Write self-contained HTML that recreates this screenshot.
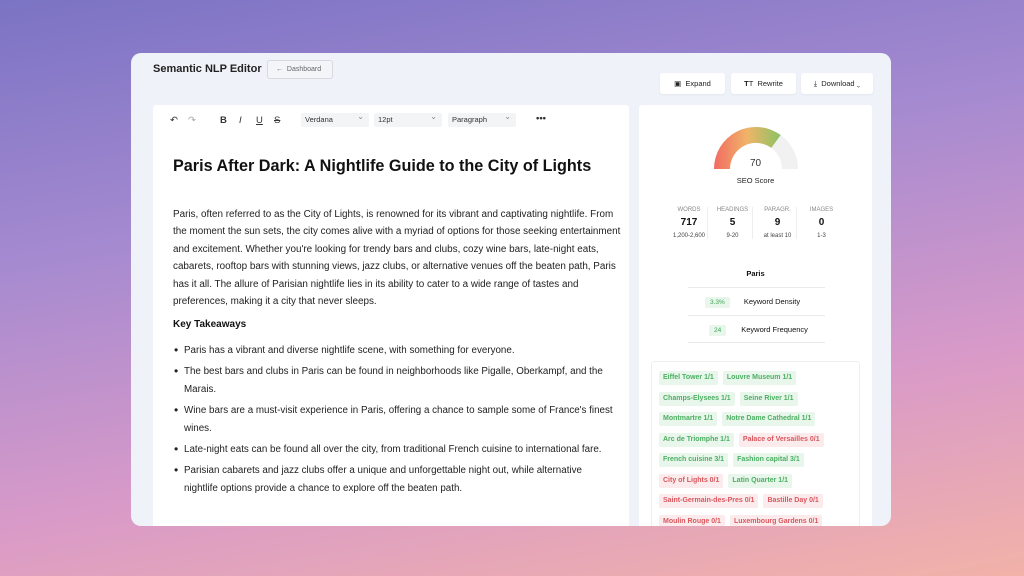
<!DOCTYPE html>
<html><head><meta charset="utf-8"><style>
*{box-sizing:border-box;margin:0;padding:0}
body{width:1024px;height:576px;overflow:hidden;font-family:"Liberation Sans",sans-serif;color:#111;
background:linear-gradient(170deg,#7b73c4 0%,#a58ad0 35%,#d99ac8 70%,#f2b2a8 100%);position:relative}
.card{position:absolute;left:131px;top:53px;width:760px;height:473px;background:#eff2f8;border-radius:10px;overflow:hidden}
.title{position:absolute;left:22px;top:10px;font-size:11px;font-weight:bold;color:#222}
.dash{position:absolute;left:136px;top:7px;width:66px;height:19px;border:1px solid #d6d9e0;border-radius:3px;background:#f3f5f9;font-size:7px;color:#666;line-height:17px;padding-left:8px}
.btn{position:absolute;top:20px;height:21px;background:#fff;border-radius:3px;font-size:7.5px;color:#222;line-height:21px;text-align:center;box-shadow:0 1px 2px rgba(0,0,0,.05)}
.ed{position:absolute;left:22px;top:52px;width:476px;height:430px;background:#fff;border-radius:3px}
.tb{position:absolute;top:10px;font-size:9.5px;color:#333}
.sel{position:absolute;top:8px;height:14px;background:#f3f4f6;border-radius:2px;font-size:7.5px;line-height:14px;padding-left:4px;color:#333}
.sel:after{content:"⌄";position:absolute;right:5px;top:-3px;color:#888;font-size:8px}
h1{position:absolute;left:20px;top:52px;font-size:16.2px;font-weight:bold;white-space:nowrap}
.p{position:absolute;left:20px;top:101px;width:452px;font-size:9.9px;line-height:17.4px;color:#222}
.kt{position:absolute;left:20px;top:214px;font-size:10px;font-weight:bold}
ul{position:absolute;left:20px;top:237px;width:440px;font-size:9.8px;line-height:17.4px;list-style:none;color:#222}
li{padding-left:11px;position:relative;margin-bottom:4px}
li:before{content:"•";position:absolute;left:1px;font-size:12px}
.rp{position:absolute;left:508px;top:52px;width:233px;height:430px;background:#fff;border-radius:3px}
.stat{position:absolute;top:102px;width:50px;text-align:center}
.stat .a{font-size:6px;color:#888}.stat .b{font-size:10px;font-weight:bold;margin-top:4px}.stat .c{font-size:6px;color:#444;margin-top:5px}
.kw{position:absolute;left:49px;width:137px;border-top:1px solid #e8eaee;height:28px;font-size:7.5px;line-height:28px}
.pill{display:inline-block;background:#e9f6ec;color:#3aa655;font-size:6.5px;padding:0 5px;line-height:11px;border-radius:2px}
.tags{position:absolute;left:12px;top:256px;width:209px;height:200px;border:1px solid #eceef2;border-radius:3px;padding:9px 0 0 7px;display:flex;flex-wrap:wrap;align-content:flex-start}
.t{display:block;font-size:7px;font-weight:bold;padding:0 4px;height:14px;line-height:14px;border-radius:2px;margin:0 5px 6.5px 0}
.br{flex-basis:100%;height:0}
.g{background:#e8f6eb;color:#4caf62}.r{background:#fcebec;color:#d9575d}
</style></head><body>
<div class="card">
<div class="title">Semantic NLP Editor</div>
<div class="dash">←&nbsp;&nbsp;Dashboard</div>
<div class="btn" style="left:529px;width:65px">▣&nbsp;&nbsp;Expand</div>
<div class="btn" style="left:600px;width:65px"><b>T</b>T&nbsp;&nbsp;Rewrite</div>
<div class="btn" style="left:670px;width:72px">⤓&nbsp;&nbsp;Download ⌄</div>
<div class="ed">
<div class="tb" style="left:17px">↶</div><div class="tb" style="left:35px;color:#aaa">↷</div>
<div class="tb" style="left:67px;font-weight:bold">B</div><div class="tb" style="left:86px;font-style:italic">I</div>
<div class="tb" style="left:103px;text-decoration:underline">U</div><div class="tb" style="left:121px;text-decoration:line-through">S</div>
<div class="sel" style="left:148px;width:68px">Verdana</div>
<div class="sel" style="left:221px;width:68px">12pt</div>
<div class="sel" style="left:295px;width:68px">Paragraph</div>
<div class="tb" style="left:383px;font-weight:bold;top:8px">•••</div>
<h1>Paris After Dark: A Nightlife Guide to the City of Lights</h1>
<div class="p">Paris, often referred to as the City of Lights, is renowned for its vibrant and captivating nightlife. From the moment the sun sets, the city comes alive with a myriad of options for those seeking entertainment and excitement. Whether you're looking for trendy bars and clubs, cozy wine bars, late-night eats, cabarets, rooftop bars with stunning views, jazz clubs, or alternative venues off the beaten path, Paris has it all. The allure of Parisian nightlife lies in its ability to cater to a wide range of tastes and preferences, making it a city that never sleeps.</div>
<div class="kt">Key Takeaways</div>
<ul>
<li>Paris has a vibrant and diverse nightlife scene, with something for everyone.</li>
<li>The best bars and clubs in Paris can be found in neighborhoods like Pigalle, Oberkampf, and the Marais.</li>
<li>Wine bars are a must-visit experience in Paris, offering a chance to sample some of France's finest wines.</li>
<li>Late-night eats can be found all over the city, from traditional French cuisine to international fare.</li>
<li>Parisian cabarets and jazz clubs offer a unique and unforgettable night out, while alternative nightlife options provide a chance to explore off the beaten path.</li>
</ul>
</div>
<div class="rp">
<svg style="position:absolute;left:74px;top:20px" width="86" height="45" viewBox="0 0 86 45">
<defs><linearGradient id="gg" x1="0" x2="1"><stop offset="0" stop-color="#f26b63"/><stop offset=".5" stop-color="#f0b468"/><stop offset="1" stop-color="#8cc263"/></linearGradient></defs>
<path d="M1 44A42 42 0 0 1 85 44L69 44A26 26 0 0 0 17 44Z" fill="#f1f1f1"/>
<path d="M1 44A42 42 0 0 1 67.7 10L58.3 22.9A26 26 0 0 0 17 44Z" fill="url(#gg)"/>
</svg>
<div style="position:absolute;left:0;width:233px;text-align:center;top:53px;font-size:10px;color:#333">70</div>
<div style="position:absolute;left:0;width:233px;text-align:center;top:71px;font-size:7.5px;color:#222">SEO Score</div>
<div class="stat" style="left:25px">
<div class="a">WORDS</div><div class="b">717</div><div class="c">1,200-2,600</div></div>
<div class="stat" style="left:68px;border-left:1px solid #eee">
<div class="a">HEADINGS</div><div class="b">5</div><div class="c">9-20</div></div>
<div class="stat" style="left:113px;border-left:1px solid #eee">
<div class="a">PARAGR.</div><div class="b">9</div><div class="c">at least 10</div></div>
<div class="stat" style="left:157px;border-left:1px solid #eee">
<div class="a">IMAGES</div><div class="b">0</div><div class="c">1-3</div></div>
<div style="position:absolute;left:0;width:233px;text-align:center;top:164px;font-size:7.5px;font-weight:bold">Paris</div>
<div class="kw" style="top:182px"><span class="pill" style="margin:0 14px 0 17px">3.3%</span>Keyword Density</div>
<div class="kw" style="top:210px;border-bottom:1px solid #e8eaee"><span class="pill" style="margin:0 15px 0 21px">24</span>Keyword Frequency</div>
<div class="tags">
<span class="t g">Eiffel Tower 1/1</span><span class="t g">Louvre Museum 1/1</span><span class="br"></span>
<span class="t g">Champs-Elysees 1/1</span><span class="t g">Seine River 1/1</span><span class="br"></span>
<span class="t g">Montmartre 1/1</span><span class="t g">Notre Dame Cathedral 1/1</span><span class="br"></span>
<span class="t g">Arc de Triomphe 1/1</span><span class="t r">Palace of Versailles 0/1</span><span class="br"></span>
<span class="t g">French cuisine 3/1</span><span class="t g">Fashion capital 3/1</span><span class="br"></span>
<span class="t r">City of Lights 0/1</span><span class="t g">Latin Quarter 1/1</span><span class="br"></span>
<span class="t r">Saint-Germain-des-Pres 0/1</span><span class="t r">Bastille Day 0/1</span><span class="br"></span>
<span class="t r">Moulin Rouge 0/1</span><span class="t r">Luxembourg Gardens 0/1</span>
</div>
</div>
</div>
</body></html>
